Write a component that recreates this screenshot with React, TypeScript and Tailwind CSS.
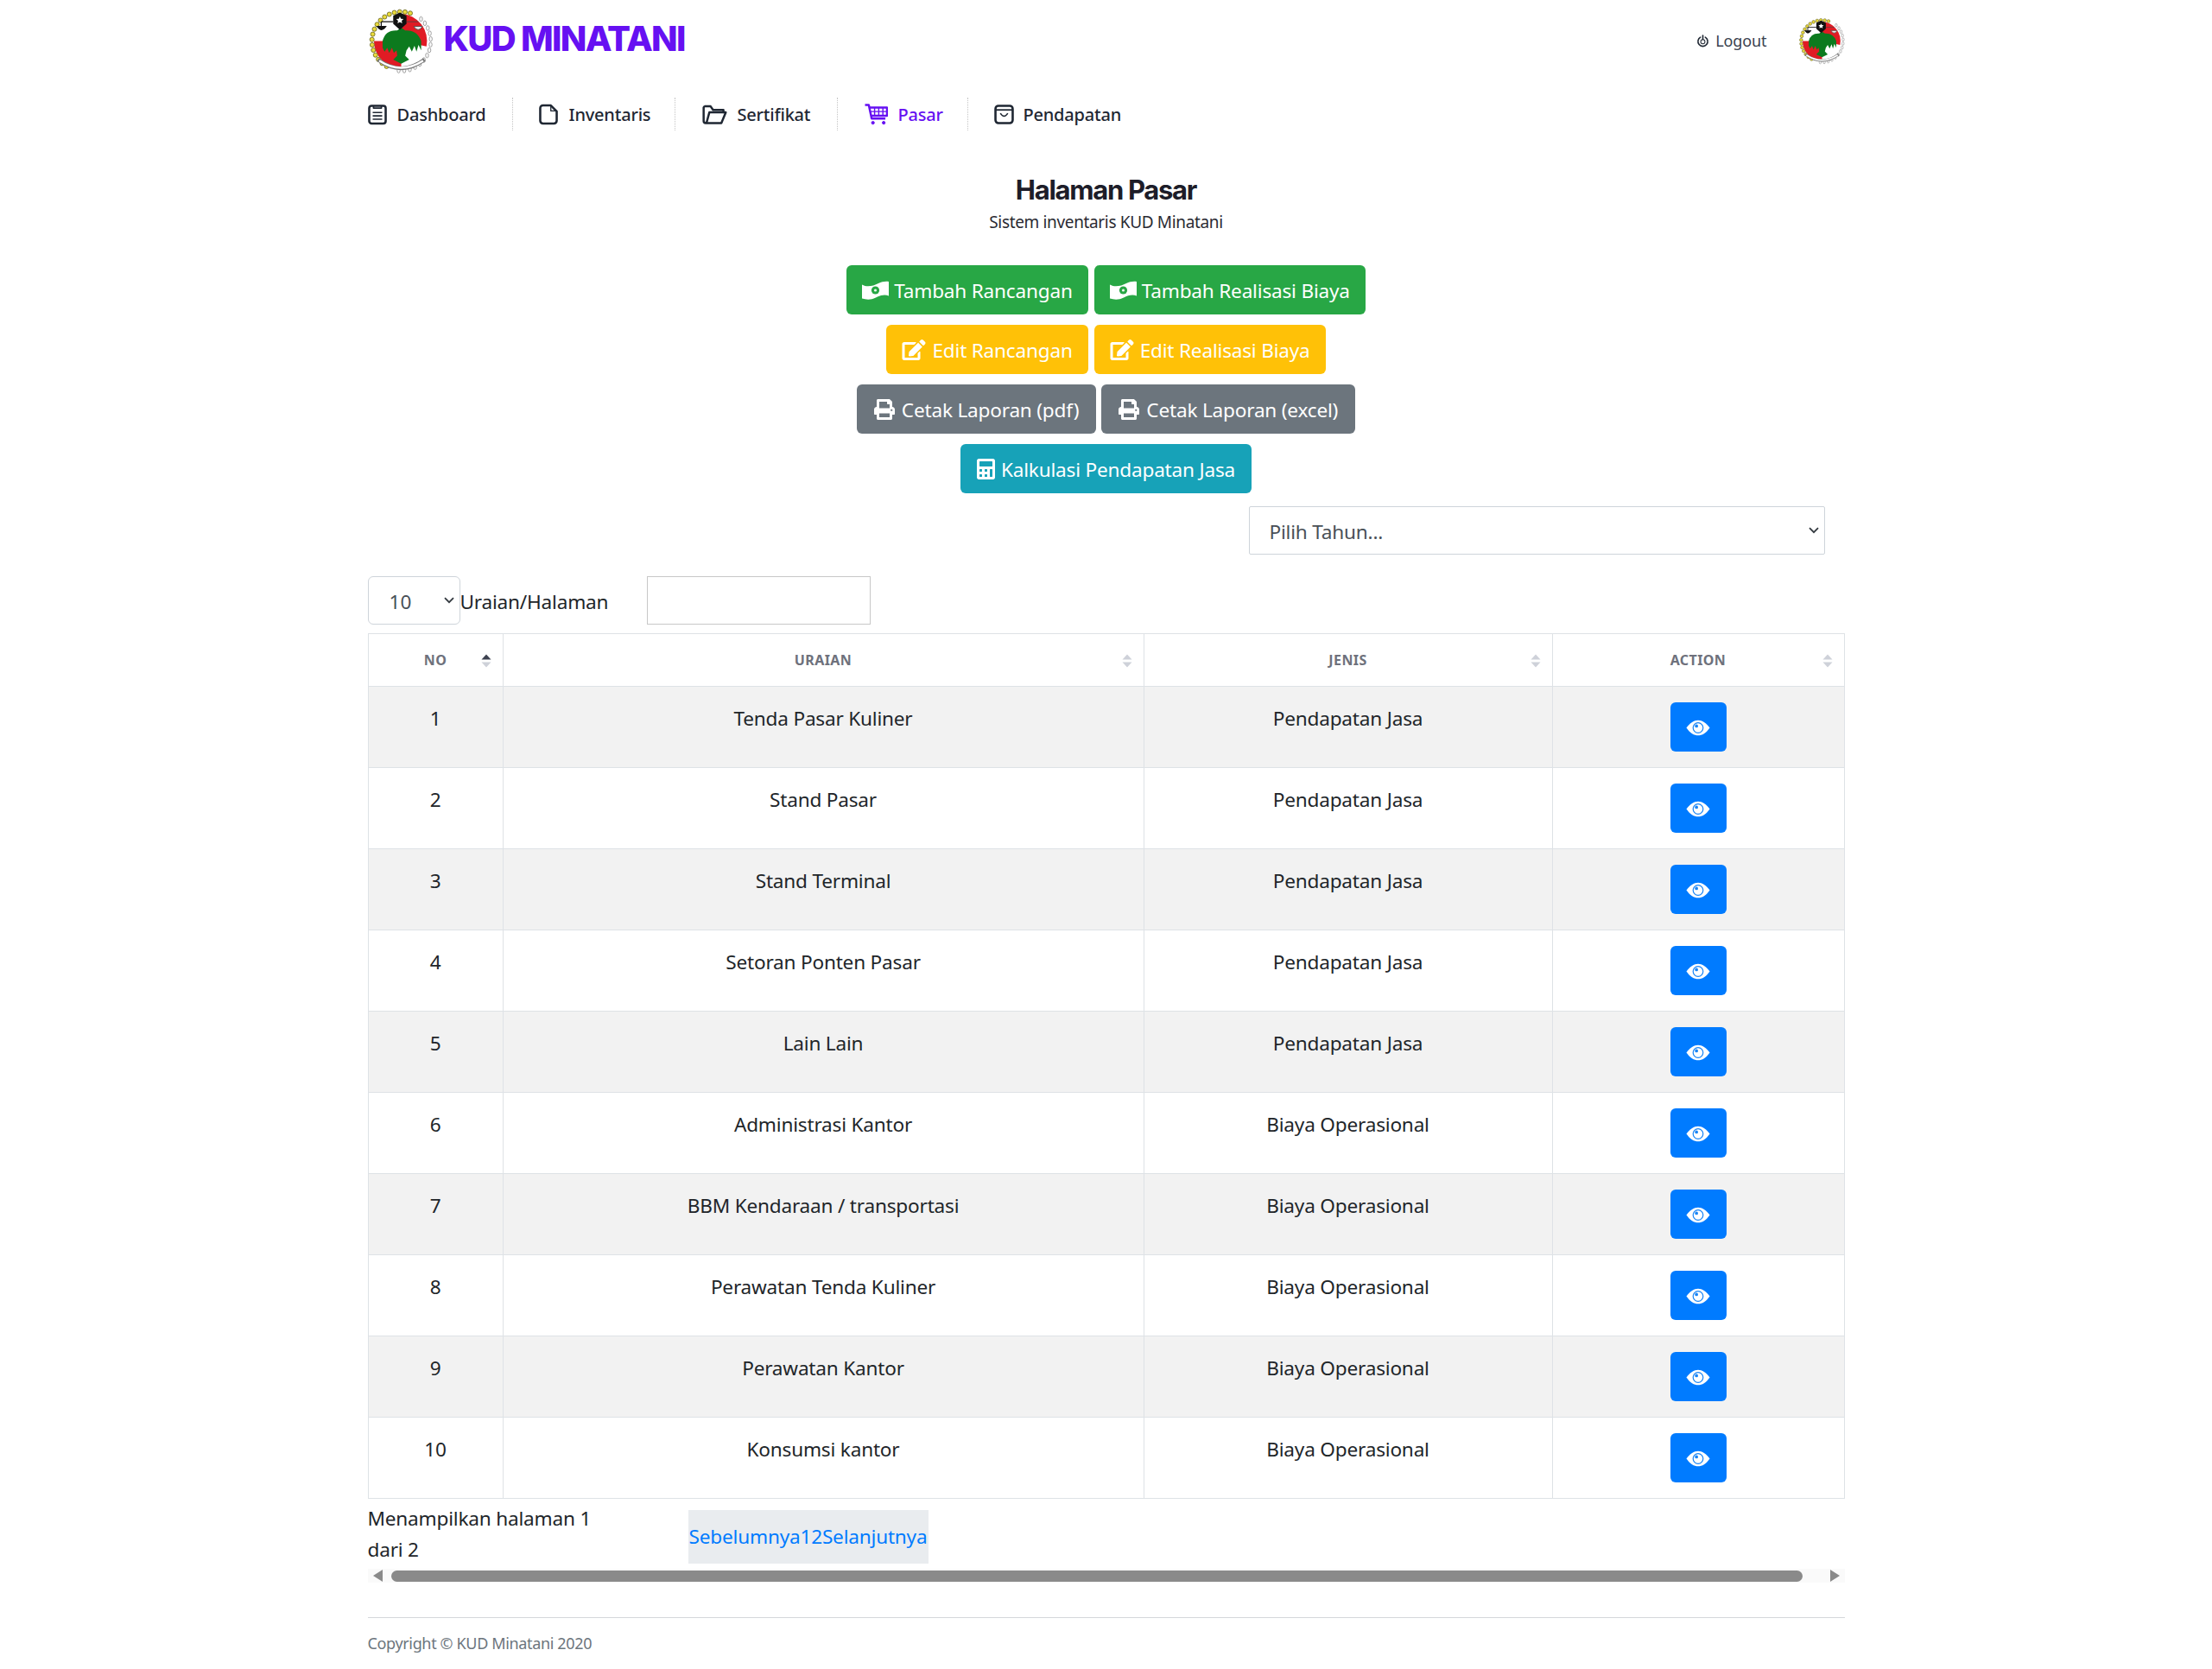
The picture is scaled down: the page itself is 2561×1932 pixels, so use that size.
import React from "react";
import { FaEdit, FaPrint, FaCalculator } from "react-icons/fa";

const BODY = "font-['Noto_Sans','Open_Sans',sans-serif]";

function Logo({ className }: { className: string }) {
  const beads = Array.from({ length: 17 }, (_, i) => {
    const a = (Math.PI * (120 + i * 10.5)) / 180;
    return [50 + 44 * Math.cos(a), 50 + 44 * Math.sin(a)];
  });
  const leaves = Array.from({ length: 14 }, (_, i) => {
    const a = (Math.PI * (-48 + i * 11)) / 180;
    return [50 + 44.5 * Math.cos(a), 50 + 44.5 * Math.sin(a)];
  });
  return (
    <svg viewBox="0 0 100 100" className={className}>
      <circle cx="50" cy="50" r="47" fill="#fff" />
      <path d="M50 9 A41 41 0 0 1 88 58 L50 50 Z" fill="#e01b24" />
      <path d="M50 91 A41 41 0 0 1 9 50 L50 50 Z" fill="#e01b24" />
      {beads.map(([x, y], i) => (
        <circle key={i} cx={x} cy={y} r="3.3" fill="#e9da3c" stroke="#5f5c1a" strokeWidth="1" />
      ))}
      {leaves.map(([x, y], i) => (
        <ellipse key={i} cx={x} cy={y} rx="2.2" ry="3.6" fill="#fff" stroke="#7a7a7a" strokeWidth="0.9" />
      ))}
      <path d="M22 50 Q26 33 44 34 L50 30 L56 34 Q74 33 80 50 L80 64 L76 56 L73 66 L70 57 L66 66 L62 58 L58 64 L56 72 L62 78 L50 84 L38 78 L44 72 L43 64 L39 68 L36 60 L32 68 L29 60 L25 66 L22 60 Z" fill="#0c7a1e" />
      <path d="M48 7 L58 12 L58 24 L48 33 L38 24 L38 12 Z" fill="#111" />
      <path d="M48 13 l1.7 3.5 3.8.5 -2.8 2.6 .7 3.8 -3.4-1.9 -3.4 1.9 .7-3.8 -2.8-2.6 3.8-.5 Z" fill="#fff" />
      <path d="M20 21 H38 M20 21 V28 M14 28 H27 Q24 33 20 33 Q17 33 14 28 Z" fill="#111" stroke="#111" strokeWidth="1.5" />
      <path d="M58 21 H76 M69 28 H82 Q79 33 75.5 33 Q72 33 69 28 Z" fill="#eee" stroke="#444" strokeWidth="1.1" />
      <path d="M15 78 Q50 104 85 78" fill="none" stroke="#777" strokeWidth="5.5" />
      <path d="M17 79.5 Q50 101 83 79.5" fill="none" stroke="#fff" strokeWidth="3" />
    </svg>
  );
}

const IconClipboard = () => (
  <svg viewBox="0 0 24 26" className="w-[22px] h-[25px]" fill="none" stroke="#1f2733" strokeWidth="2.8" strokeLinejoin="round">
    <rect x="1.6" y="2" width="20.8" height="22.4" rx="3" />
    <path d="M7 2V5H17V2M6 10.5H18M6 14.7H18M6 19H18" strokeWidth="1.8" />
  </svg>
);
const IconFile = () => (
  <svg viewBox="0 0 24 26" className="w-[22px] h-[25px]" fill="none" stroke="#1f2733" strokeWidth="2.8" strokeLinejoin="round">
    <path d="M5 1.6H15L22.4 9V21A3.4 3.4 0 0 1 19 24.4H5A3.4 3.4 0 0 1 1.6 21V5A3.4 3.4 0 0 1 5 1.6Z" />
    <path d="M15 2V8.5H22" strokeWidth="1.4" />
  </svg>
);
const IconFolder = () => (
  <svg viewBox="0 0 30 24" className="w-[29px] h-[23px]" fill="none" stroke="#1f2733" strokeWidth="2.6" strokeLinejoin="round">
    <path d="M5 22.4H23L28.4 9.5H25.5V6.5H13L10 2.2H3A1.8 1.8 0 0 0 1.6 3.6V20A2.5 2.5 0 0 0 4 22.4Z" />
    <path d="M5 22.4L8.5 9.5H25.5" />
  </svg>
);
const IconCart = () => (
  <svg viewBox="0 0 28 26" className="w-[27px] h-[25px]" fill="none" stroke="#6610f2" strokeWidth="2.6" strokeLinejoin="round">
    <path d="M0.5 1.6H5L8.5 18H25" />
    <path d="M6 4.8H27V14.5H7.8" />
    <path d="M12 5V14.5M17 5V14.5M22 5V14.5M7 9.5H27" strokeWidth="1.5" />
    <circle cx="10" cy="23" r="1.7" fill="#6610f2" strokeWidth="1" />
    <circle cx="23" cy="23" r="1.7" fill="#6610f2" strokeWidth="1" />
  </svg>
);
const IconBag = () => (
  <svg viewBox="0 0 24 24" className="w-[23px] h-[23px]" fill="none" stroke="#1f2733" strokeWidth="2.7" strokeLinejoin="round">
    <rect x="1.6" y="1.6" width="20.8" height="20.8" rx="3.5" />
    <path d="M1.6 6.5H22.4" strokeWidth="1.9" />
    <path d="M7.5 10.5Q12 17.5 16.5 10.5" strokeWidth="1.6" />
  </svg>
);
const IconPower = () => (
  <svg viewBox="0 0 16 16" className="w-[15px] h-[15px]" fill="none" stroke="#222a35" strokeWidth="1.7" strokeLinecap="round">
    <path d="M5 3.3A6 6 0 1 0 11 3.3" />
    <path d="M8 1.2V6" />
    <circle cx="8" cy="8.8" r="2.6" strokeWidth="1.1" />
  </svg>
);
const IconMoney = () => (
  <svg viewBox="0 0 31 22" className="w-[31px] h-[22px] mr-[6px] shrink-0">
    <path d="M0 4.5C6 8 13 6 19 3C23 1 27 0.5 31 1V17.5C26 15.500 21 17 16 19.500C10 22.500 5 22 0 20.500Z" fill="#fff" />
    <circle cx="15.500" cy="11" r="4.600" fill="#28a745" />
    <circle cx="15.500" cy="11" r="1.600" fill="#e9f7ec" />
  </svg>
);
const IconEye = () => (
  <svg viewBox="0 0 30 20" className="w-[28px] h-[19px] mt-[2px]">
    <path d="M0.5 10C5 3.5 10 0.5 15 0.5S25 3.5 29.500 10C25 16.500 20 19.500 15 19.500S5 16.500 0.5 10Z" fill="#fff" />
    <circle cx="15" cy="10" r="6.200" fill="none" stroke="#1a85f5" strokeWidth="1.3" />
    <circle cx="13" cy="7.800" r="2" fill="#1a85f5" />
  </svg>
);

const navItems = [
  { label: "Dashboard", icon: <IconClipboard />, w: "w-[168px]", gap: "gap-[12px]" },
  { label: "Inventaris", icon: <IconFile />, w: "w-[188px] pl-[30px]", gap: "gap-[13px]" },
  { label: "Sertifikat", icon: <IconFolder />, w: "w-[188px] pl-[31px]", gap: "gap-[12px]" },
  { label: "Pasar", icon: <IconCart />, w: "w-[151px] pl-[31px]", gap: "gap-[12px]", active: true },
  { label: "Pendapatan", icon: <IconBag />, w: "w-[190px] pl-[30px]", gap: "gap-[11px]", last: true },
];

const rows: [string, string][] = [
  ["Tenda Pasar Kuliner", "Pendapatan Jasa"],
  ["Stand Pasar", "Pendapatan Jasa"],
  ["Stand Terminal", "Pendapatan Jasa"],
  ["Setoran Ponten Pasar", "Pendapatan Jasa"],
  ["Lain Lain", "Pendapatan Jasa"],
  ["Administrasi Kantor", "Biaya Operasional"],
  ["BBM Kendaraan / transportasi", "Biaya Operasional"],
  ["Perawatan Tenda Kuliner", "Biaya Operasional"],
  ["Perawatan Kantor", "Biaya Operasional"],
  ["Konsumsi kantor", "Biaya Operasional"],
];

function Btn({ cls, icon, children }: { cls: string; icon: React.ReactNode; children: React.ReactNode }) {
  return (
    <button className={`h-[57px] rounded-[6px] text-white text-[22.6px] tracking-[-0.2px] flex items-center whitespace-nowrap ${cls}`}>
      {icon}
      <span className="pt-[2px]">{children}</span>
    </button>
  );
}

function Sort({ active }: { active?: boolean }) {
  return (
    <svg viewBox="0 0 12 16" className="absolute right-[13px] top-[23px] w-[12px] h-[16px]">
      <path d="M6 0.5L11.5 6.5H0.5Z" fill={active ? "#3d4250" : "#ced1d9"} />
      <path d="M6 15.5L11.5 9.5H0.5Z" fill="#ced1d9" />
    </svg>
  );
}

function Chevron() {
  return (
    <svg viewBox="0 0 12 8" className="w-[12px] h-[8px]" fill="none" stroke="#343a40" strokeWidth="1.8">
      <path d="M1 1.2L6 6.2L11 1.2" />
    </svg>
  );
}

const cell = "border border-[#dee2e6] text-center align-top pt-[19px] text-[22.6px] leading-[36px] tracking-[-0.2px]";

export default function App() {
  return (
    <div className={`${BODY} bg-white w-full h-[1932px] text-[#212529] overflow-hidden`}>
      <div className="w-[1710px] mx-auto">
        <header className="h-[92px] flex items-center justify-between">
          <div className="flex items-center gap-[11px] mt-[3px]">
            <Logo className="w-[77px] h-[77px]" />
            <span className="font-['Inter',sans-serif] font-extrabold text-[40px] tracking-[-1.7px] text-[#6610f2] leading-none -mt-[5px]">
              KUD MINATANI
            </span>
          </div>
          <div className="flex items-center mt-[2px] -mr-[1px]">
            <IconPower />
            <span className="ml-[7px] text-[18px] tracking-[-0.1px] text-[#3a4250]">Logout</span>
            <Logo className="ml-[36px] w-[55px] h-[55px] mt-[1px]" />
          </div>
        </header>

        <nav className="flex items-center h-[38px] mt-[21px]">
          {navItems.map((n) => (
            <div
              key={n.label}
              className={`h-[38px] flex items-center ${n.gap} ${n.w} ${n.last ? "" : "border-r border-dotted border-[#c4c4c4]"}`}
            >
              {n.icon}
              <span className={`text-[20px] pt-[1px] font-medium tracking-[-0.2px] ${n.active ? "text-[#6610f2]" : "text-[#1f2733]"}`}>
                {n.label}
              </span>
            </div>
          ))}
        </nav>

        <div className="text-center mt-[49px]">
          <h1 className="font-['Inter',sans-serif] font-bold text-[31px] leading-[40px] tracking-[-1.3px] text-[#1d1d29]">Halaman Pasar</h1>
          <p className="text-[19px] tracking-[-0.35px] leading-[24px] mt-[5px] text-[#2b2b33]">Sistem inventaris KUD Minatani</p>
        </div>

        <div className="flex flex-col items-center mt-[38px] gap-[12px]">
          <div className="flex gap-[7px]">
            <Btn cls="bg-[#28a745] px-[18px]" icon={<IconMoney />}>Tambah Rancangan</Btn>
            <Btn cls="bg-[#28a745] px-[18px]" icon={<IconMoney />}>Tambah Realisasi Biaya</Btn>
          </div>
          <div className="flex gap-[7px]">
            <Btn cls="bg-[#ffc107] px-[18px]" icon={<FaEdit className="w-[28px] h-[24px] mr-[7px]" />}>Edit Rancangan</Btn>
            <Btn cls="bg-[#ffc107] px-[18px]" icon={<FaEdit className="w-[28px] h-[24px] mr-[7px]" />}>Edit Realisasi Biaya</Btn>
          </div>
          <div className="flex gap-[6px]">
            <Btn cls="bg-[#6c757d] px-[20px]" icon={<FaPrint className="w-[24px] h-[24px] mr-[8px]" />}>Cetak Laporan (pdf)</Btn>
            <Btn cls="bg-[#6c757d] px-[20px]" icon={<FaPrint className="w-[24px] h-[24px] mr-[8px]" />}>Cetak Laporan (excel)</Btn>
          </div>
          <Btn cls="bg-[#17a2b8] px-[19px]" icon={<FaCalculator className="w-[21px] h-[24px] mr-[7px]" />}>Kalkulasi Pendapatan Jasa</Btn>
        </div>

        <div className="flex justify-end mt-[15px] pr-[23px]">
          <div className="w-[667px] h-[56px] border border-[#ced4da] rounded-[2px] pl-[23px] pr-[6px] flex items-center justify-between text-[22.6px] tracking-[-0.2px] text-[#495057]">
            <span className="pt-[4px]">Pilih Tahun...</span>
            <Chevron />
          </div>
        </div>

        <div className="flex items-center mt-[25px] h-[56px]">
          <div className="w-[107px] h-[56px] border border-[#ced4da] rounded-[6px] pl-[24px] pr-[6px] flex items-center justify-between text-[22.6px] text-[#495057]">
            <span className="pt-[4px]">10</span>
            <Chevron />
          </div>
          <span className="text-[22.6px] pt-[4px] tracking-[-0.2px]">Uraian/Halaman</span>
          <div className="ml-[45px] w-[259px] h-[56px] border border-[#c8c8c8]" />
        </div>

        <table className="mt-[10px] w-[1709px] table-fixed border-collapse">
          <colgroup>
            <col className="w-[156px]" />
            <col className="w-[742px]" />
            <col className="w-[473px]" />
            <col className="w-[338px]" />
          </colgroup>
          <thead>
            <tr className="h-[61px]">
              {["NO", "URAIAN", "JENIS", "ACTION"].map((h, i) => (
                <th key={h} className="relative border border-[#dee2e6] text-[16px] font-bold tracking-[0.4px] text-[#6e717c] align-middle">
                  {h}
                  <Sort active={i === 0} />
                </th>
              ))}
            </tr>
          </thead>
          <tbody>
            {rows.map((r, i) => (
              <tr key={i} className={`h-[94px] ${i % 2 === 0 ? "bg-[#f2f2f2]" : "bg-white"}`}>
                <td className={cell}>{i + 1}</td>
                <td className={cell}>{r[0]}</td>
                <td className={cell}>{r[1]}</td>
                <td className="border border-[#dee2e6] align-top pt-[18px]">
                  <button className="mx-auto w-[65px] h-[57px] rounded-[6px] bg-[#007bff] flex items-center justify-center">
                    <IconEye />
                  </button>
                </td>
              </tr>
            ))}
          </tbody>
        </table>

        <div className="flex items-start mt-[5px] text-[22.6px] leading-[36px] tracking-[-0.2px]">
          <div className="w-[371px]">Menampilkan halaman 1<br />dari 2</div>
          <div className="mt-[8px] h-[62px] w-[278px] bg-[#e9ecef] flex items-center justify-center text-[#007bff] whitespace-nowrap">
            Sebelumnya12Selanjutnya
          </div>
        </div>

        <div className="h-[16px] bg-[#fafafa] flex items-center px-[6px] mt-[4px]">
          <svg viewBox="0 0 11 14" className="w-[11px] h-[14px]"><path d="M11 0V14L0 7Z" fill="#8a8a8a" /></svg>
          <div className="ml-[10px] w-[1634px] h-[13px] rounded-full bg-[#8a8a8a]" />
          <svg viewBox="0 0 11 14" className="ml-auto w-[11px] h-[14px]"><path d="M0 0V14L11 7Z" fill="#8a8a8a" /></svg>
        </div>

        <div className="mt-[40px] border-t border-[#d5d7da] pt-[16px] text-[18px] leading-[27px] tracking-[-0.35px] text-[#6c757d]">
          Copyright © KUD Minatani 2020
        </div>
      </div>
    </div>
  );
}
